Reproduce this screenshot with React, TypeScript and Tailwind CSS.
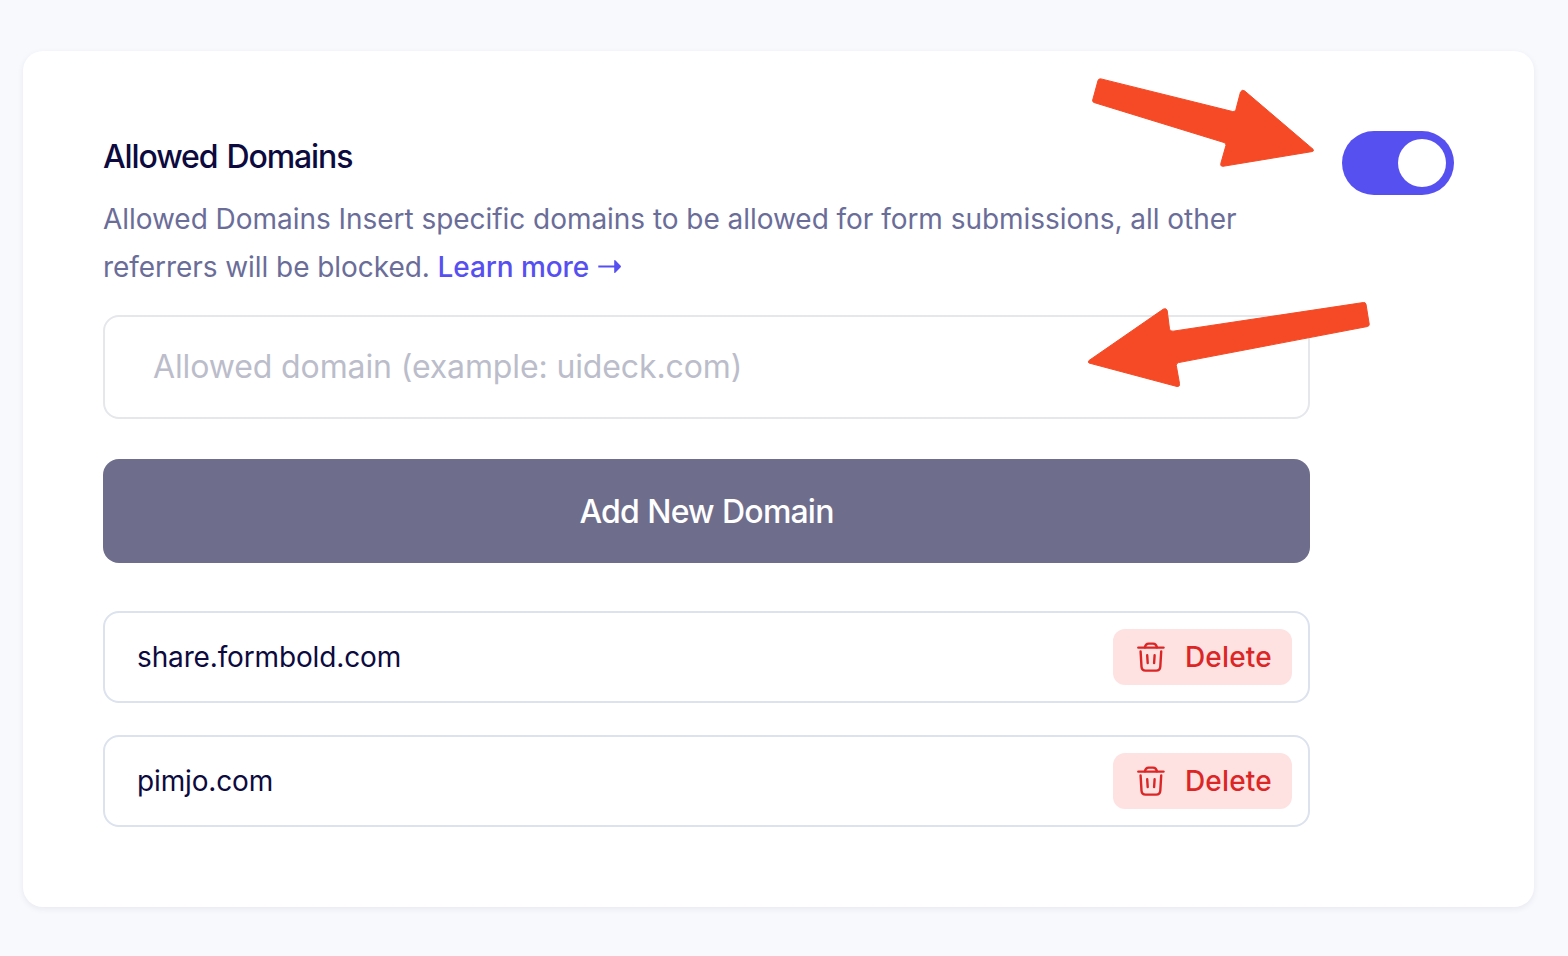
const domains = ["share.formbold.com", "pimjo.com"];

function TrashIcon() {
  return (
    <svg width="32" height="32" viewBox="0 0 32 32" fill="none" stroke="currentColor" strokeWidth="2.4" strokeLinecap="round" strokeLinejoin="round">
      <path d="M3.300 6.600H28.500" />
      <path d="M9.900 6.300C10.3 4 11.4 2.600 13.600 2.600H18.200C20.400 2.600 21.5 4 21.900 6.300" />
      <path d="M5.600 10.500L6.500 25.600C6.700 28.500 8 29.600 10.600 29.600H21.200C23.800 29.600 25.100 28.500 25.300 25.600L26.200 10.500" />
      <path d="M12.200 14.300L12.700 22.100M19.600 14.300L19.100 22.100" />
    </svg>
  );
}

function LinkArrow() {
  return (
    <svg className="ml-[2px] inline-block align-baseline" width="24" height="20" viewBox="0 0 24 20" fill="currentColor">
      <path d="M0.300 8.500H16.200V3.600Q16.400 2.600 17.300 3.300L22.700 8.800Q23.300 9.500 22.700 10.200L17.300 15.700Q16.400 16.400 16.200 15.400V10.600H0.300Z" />
    </svg>
  );
}

function DomainRow({ name }: { name: string }) {
  return (
    <li className="flex h-[92px] items-center justify-between rounded-2xl border-2 border-[#dce2ee] pr-4 pl-8">
      <span className="text-[28px] leading-10 tracking-[-0.14px] text-[#0c0a3e]">{name}</span>
      <button className="flex h-14 w-[179px] items-center gap-[18px] rounded-xl bg-[#fee2e2] pl-[22px] text-[28px] font-medium tracking-[0.15px] text-[#dc2626]">
        <TrashIcon />
        <span>Delete</span>
      </button>
    </li>
  );
}

export default function App() {
  return (
    <div className="relative h-[956px] w-[1568px] overflow-hidden bg-[#f8f9fd] pt-[51px] pl-[23px] font-['Inter',sans-serif]">
      <section className="flex h-[856px] w-[1511px] items-start justify-between rounded-[20px] bg-white p-20 shadow-[0_2px_6px_rgba(30,30,80,0.07)]">
        <div className="w-[1207px]">
          <h3 className="h-[64px] pt-[6px] text-[32px] leading-10 font-medium tracking-[-1.1px] text-[#0c0a3e] [word-spacing:1.5px]">Allowed Domains</h3>
          <p className="h-24 text-[28px] leading-[48px] tracking-[-0.04px] whitespace-nowrap text-[#6b6d99]">
            Allowed Domains Insert specific domains to be allowed for form submissions, all other
            <br />
            <span className="tracking-[-0.06px]">referrers will be blocked.</span>{" "}
            <a className="font-medium tracking-[-0.1px] text-[#5750f1]">
              Learn more <LinkArrow />
            </a>
          </p>
          <input
            className="mt-6 block h-[104px] w-full rounded-2xl border-2 border-[#e5e7eb] px-12 pb-[2px] text-[32px] tracking-[-0.12px] placeholder:text-[#bbbdca]"
            placeholder="Allowed domain (example: uideck.com)"
          />
          <button className="mt-10 block h-[104px] w-full rounded-2xl bg-[#6f6d8c] pt-[2px] text-[32px] font-medium tracking-[-0.8px] text-white [word-spacing:0.5px]">
            Add New Domain
          </button>
          <ul className="mt-12 flex flex-col gap-8">
            {domains.map((d) => (
              <DomainRow key={d} name={d} />
            ))}
          </ul>
        </div>
        <div className="flex h-16 w-28 items-center justify-end rounded-full bg-[#5750f1] p-2">
          <div className="size-12 rounded-full bg-white" />
        </div>
      </section>
      <svg className="absolute top-[70px] left-[1080px]" width="300" height="330" viewBox="1080 70 300 330" fill="#f54a25" stroke="#f54a25" strokeWidth="1" strokeLinejoin="round">
        <path d="M1101 78.9L1232.500 111.500Q1235.300 112.200 1235.900 109.500L1240.500 92Q1242 89.300 1244.500 90.800L1313 149.200Q1314.200 150.900 1312.500 151.500L1223 166.300Q1220 166.500 1220.800 163.500L1225.900 145.600Q1226.400 143.400 1224 142.500L1094 102.500Q1092.200 101.800 1092.700 100L1098 80.500Q1098.800 78.400 1101 78.900Z" />
        <path d="M1363.500 302.500L1173 331.200Q1169.800 331.400 1169.500 328.900L1167.200 310.500Q1166.300 307.800 1163.500 309L1089 360.500Q1087.700 362 1089 363L1177 386.500Q1180 387 1179.500 383.500L1176.300 365.500Q1176.100 363.400 1178.500 362.600L1367.500 326.500Q1369.500 326 1369.200 324L1366 304.300Q1365.500 302.200 1363.500 302.500Z" />
      </svg>
    </div>
  );
}
